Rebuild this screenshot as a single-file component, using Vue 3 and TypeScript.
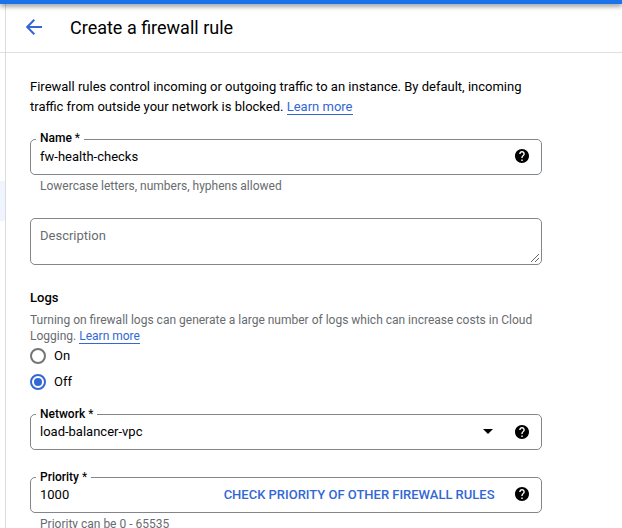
<script setup lang="ts">
import { ref } from 'vue'

const name = ref('fw-health-checks')
const network = ref('load-balancer-vpc')
const priority = ref('1000')
const logs = ref<'On' | 'Off'>('Off')
const logOptions = ['On', 'Off'] as const
const helpPath =
  'M12 2C6.48 2 2 6.48 2 12s4.48 10 10 10 10-4.48 10-10S17.52 2 12 2zm1 17h-2v-2h2v2zm2.07-7.75l-.9.92C13.45 12.9 13 13.5 13 15h-2v-.5c0-1.1.45-2.1 1.17-2.83l1.24-1.26c.37-.36.59-.86.59-1.41 0-1.1-.9-2-2-2s-2 .9-2 2H8c0-2.21 1.79-4 4-4s4 1.79 4 4c0 .88-.36 1.68-.93 2.25z'
</script>

<template>
  <div class="page">
    <div class="topbar"></div>
    <aside class="rail"><div class="rail-head"></div><div class="rail-active"></div></aside>
    <section class="panel">
      <header class="header">
        <svg class="back" viewBox="0 0 16 16"><path d="M16 8H1.5M8.3 .8L1.2 8l7.1 7.2" /></svg>
        <h1>Create a firewall rule</h1>
      </header>
      <main class="form">
        <p class="intro">
          <span>Firewall rules control incoming or outgoing traffic to an instance. By default, incoming</span><br />
          <span>traffic from outside your network is blocked.</span> <a class="link">Learn more</a>
        </p>

        <fieldset class="field field-name">
          <legend>Name <span class="star">*</span></legend>
          <span class="value">{{ name }}</span>
          <svg class="help" viewBox="2 2 20 20"><path :d="helpPath" /></svg>
        </fieldset>
        <p class="hint">Lowercase letters, numbers, hyphens allowed</p>

        <div class="description">
          <span>Description</span>
          <svg class="grip" viewBox="0 0 8 8"><path d="M0 8L8 0M4 8L8 4" /></svg>
        </div>

        <h2>Logs</h2>
        <p class="logs-text">
          <span>Turning on firewall logs can generate a large number of logs which can increase costs in Cloud</span><br />
          <span>Logging.</span> <a class="link">Learn more</a>
        </p>
        <div class="radios">
          <label v-for="option in logOptions" :key="option" class="radio" @click="logs = option">
            <span class="circle" :class="{ checked: logs === option }"></span>
            <span class="radio-text">{{ option }}</span>
          </label>
        </div>

        <fieldset class="field field-network">
          <legend>Network <span class="star">*</span></legend>
          <span class="value">{{ network }}</span>
          <svg class="caret" viewBox="0 0 10 5"><path d="M0 0h10L5 5z" /></svg>
          <svg class="help" viewBox="2 2 20 20"><path :d="helpPath" /></svg>
        </fieldset>

        <fieldset class="field field-priority">
          <legend>Priority <span class="star">*</span></legend>
          <span class="value">{{ priority }}</span>
          <a class="action">CHECK PRIORITY OF OTHER FIREWALL RULES</a>
          <svg class="help" viewBox="2 2 20 20"><path :d="helpPath" /></svg>
        </fieldset>
        <p class="hint">Priority can be 0 - 65535</p>
      </main>
    </section>
  </div>
</template>

<style>
body {
  overflow: hidden;
  background: #fff;
}
</style>

<style scoped>
.page {
  display: grid;
  grid-template-columns: 6px 1fr;
  grid-template-rows: 4px 524px;
  width: 622px;
  height: 528px;
  overflow: hidden;
  font-family: Roboto, 'Liberation Sans', sans-serif;
  font-size: 13px;
  color: #000;
}
.topbar {
  grid-column: 1 / 3;
  background: #1a73e8;
  box-shadow: 0 2px 5px rgba(0, 0, 0, 0.5);
  z-index: 1;
}
.rail {
  border-right: 1px solid #dadce0;
}
.rail-head {
  height: 48px;
  border-bottom: 1px solid #e0e0e0;
}
.rail-active {
  height: 40px;
  margin-top: 128px;
  background: #f0f4ff;
}
.panel {
  min-width: 0;
}
.header {
  display: flex;
  align-items: center;
  height: 48px;
  border-bottom: 1px solid #e0e0e0;
}
.back {
  width: 16px;
  height: 16px;
  margin: 0 28px 2px 20px;
  fill: none;
  stroke: #3367d6;
  stroke-width: 2;
}
h1,
h2,
p {
  margin: 0;
}
h1 {
  font-size: 18px;
  font-weight: 400;
  line-height: 24px;
}
.form {
  width: 512px;
  padding: 24px 0 0 24px;
}
.intro {
  line-height: 20px;
  white-space: nowrap;
}
.link {
  color: #3367d6;
  border-bottom: 1px solid #3367d6;
}
.field {
  display: flex;
  align-items: center;
  box-sizing: border-box;
  min-width: 0;
  height: 44px;
  margin: 0;
  padding: 0 12px 0 9px;
  border: 1px solid #80868b;
  border-radius: 5px;
}
.field-name {
  margin-top: 14px;
}
legend {
  height: 16px;
  margin-left: -4px;
  padding: 0 4px;
  font-size: 12px;
  font-weight: 500;
  line-height: 16px;
}
.field-name legend {
  line-height: 14px;
}
.star {
  font-weight: 400;
}
.value {
  flex: 1;
  height: 25px;
  line-height: 18px;
}
.help {
  width: 14px;
  height: 14px;
  margin-bottom: 8px;
}
.field-name .help,
.field-priority .help {
  margin-bottom: 9px;
}
.hint {
  padding: 3px 0 0 10px;
  font-size: 12px;
  line-height: 16px;
  color: #686c70;
}
.description {
  display: flex;
  justify-content: space-between;
  box-sizing: border-box;
  height: 47px;
  margin-top: 24px;
  padding: 9px 2px 2px 9px;
  border: 1px solid #80868b;
  border-radius: 5px;
  line-height: 16px;
  color: #686c70;
}
.grip {
  align-self: flex-end;
  width: 8px;
  height: 8px;
  fill: none;
  stroke: #555;
  stroke-width: 0.9;
}
h2 {
  margin-top: 23px;
  font-size: 13px;
  font-weight: 500;
  line-height: 20px;
}
.logs-text {
  margin-top: 4px;
  font-size: 12px;
  line-height: 16px;
  color: #686c70;
  white-space: nowrap;
}
.radios {
  display: grid;
  gap: 10px;
  margin-top: 4px;
}
.radio {
  display: flex;
  align-items: center;
  gap: 8px;
  height: 16px;
}
.radio-text {
  height: 16px;
  line-height: 15px;
}
.circle {
  display: grid;
  place-items: center;
  box-sizing: border-box;
  width: 16px;
  height: 16px;
  border: 2px solid #757575;
  border-radius: 50%;
}
.checked {
  border-color: #3367d6;
}
.checked::after {
  content: '';
  width: 8px;
  height: 8px;
  border-radius: 50%;
  background: #3367d6;
}
.field-network {
  margin-top: 16px;
}
.caret {
  width: 10px;
  height: 5px;
  margin: 0 22px 8px 0;
}
.field-priority {
  margin-top: 19px;
}
.action {
  margin: 0 20.5px 8px 0;
  font-weight: 500;
  letter-spacing: -0.01px;
  color: #3367d6;
  white-space: nowrap;
}
</style>
